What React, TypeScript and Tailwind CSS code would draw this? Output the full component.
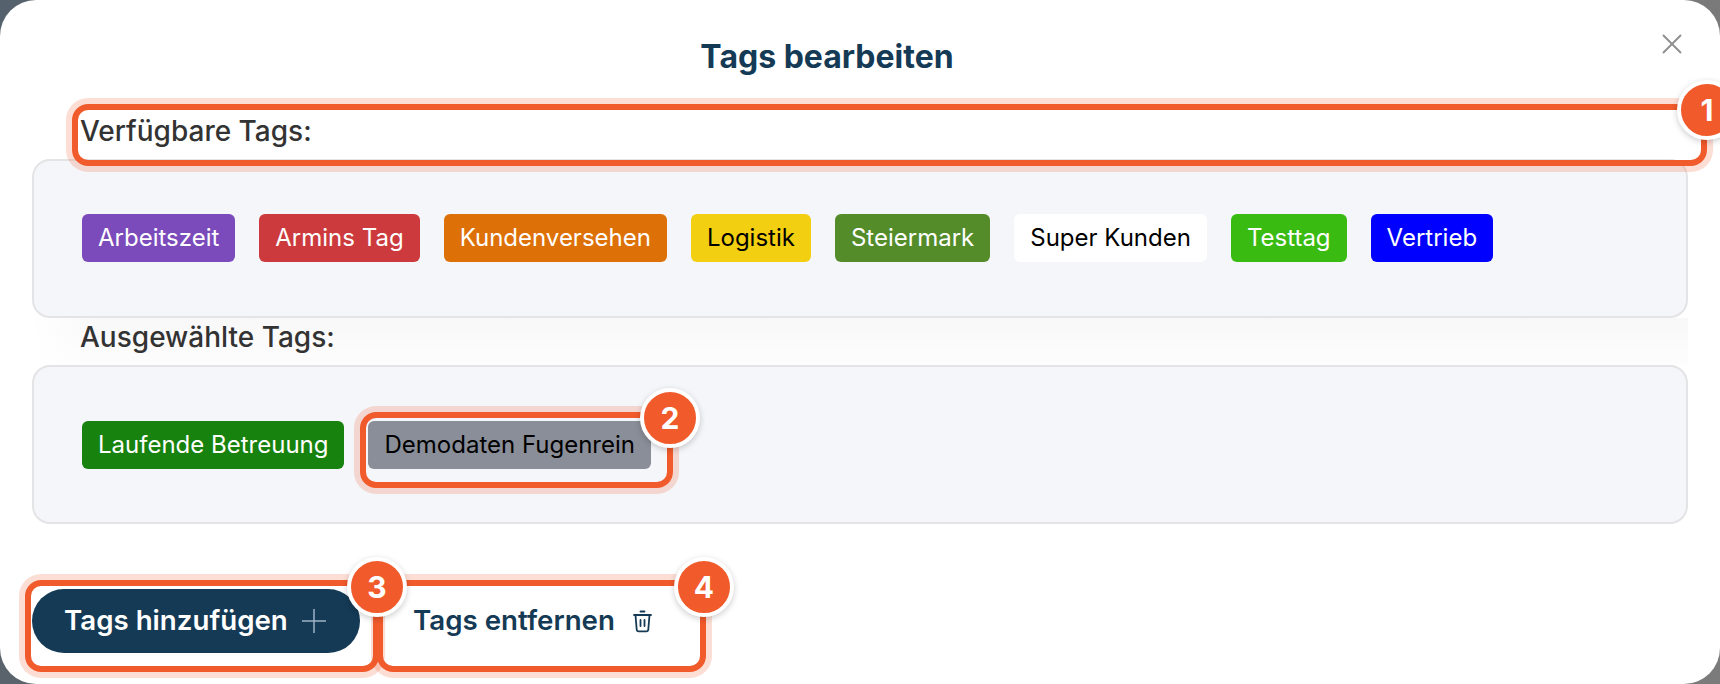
const available = [
  { label: "Arbeitszeit", className: "bg-[#7b4abb] text-white" },
  { label: "Armins Tag", className: "bg-[#cc3a3d] text-white" },
  { label: "Kundenversehen", className: "bg-[#dd7006] text-white" },
  { label: "Logistik", className: "bg-[#f2cf10] text-black" },
  { label: "Steiermark", className: "bg-[#548c2a] text-white" },
  { label: "Super Kunden", className: "bg-white text-black" },
  { label: "Testtag", className: "bg-[#3abb11] text-white" },
  { label: "Vertrieb", className: "bg-[#0000ff] text-white" },
];

const selected = [
  { label: "Laufende Betreuung", className: "bg-[#17820d] text-white" },
  { label: "Demodaten Fugenrein", className: "bg-[#8a8e98] text-black" },
];

function Tag({ label, className }: { label: string; className: string }) {
  return (
    <span className={`flex h-12 items-center rounded-md px-4 text-[24px] ${className}`}>
      {label}
    </span>
  );
}

function TagPanel({ tags, className }: { tags: { label: string; className: string }[]; className: string }) {
  return (
    <div className={`flex h-[159px] gap-6 rounded-[18px] border-2 border-[#e4e4e6] bg-[#f5f6fa] px-[48px] ${className}`}>
      {tags.map((tag) => (
        <Tag key={tag.label} {...tag} />
      ))}
    </div>
  );
}

// annotation frame drawn over the screenshot
function Frame({ className }: { className: string }) {
  return (
    <div
      className={`pointer-events-none absolute rounded-[16px] border-[6px] border-[#f15a2b] shadow-[0_0_0_6px_rgba(241,90,43,0.2)] ${className}`}
    />
  );
}

function Badge({ n, className }: { n: number; className: string }) {
  return (
    <div
      className={`absolute flex h-[60px] w-[60px] items-center justify-center rounded-full border-4 border-white bg-[#f15a2b] text-[30px] font-bold text-white shadow-[0_2px_6px_rgba(0,0,0,0.2)] ${className}`}
    >
      {n}
    </div>
  );
}

export default function App() {
  return (
    <div className="h-[684px] w-[1720px] overflow-hidden bg-[linear-gradient(100deg,#55616c_0%,#6b6b6b_30%,#7b7b7b_100%)] font-[Inter,sans-serif]">
      <div className="relative flex h-full flex-col overflow-hidden rounded-[36px] bg-white">
        <div className="flex h-[112px] items-start pt-[34px]">
          <h2 className="mt-px w-[1654px] text-center text-[32px] leading-[44px] font-bold text-[#153a55]">
            Tags bearbeiten
          </h2>
          <svg className="ml-2" width="20" height="20" viewBox="0 0 20 20" fill="none" stroke="#8d8d8d" strokeWidth="1.8">
            <path d="M1 1l18 18M19 1L1 19" />
          </svg>
        </div>

        <div className="px-8">
          <div className="h-[47px] pl-[48px] text-[28px] leading-[38px] font-medium text-[#333]">Verfügbare Tags:</div>
          <TagPanel tags={available} className="pt-[53px]" />
          <div className="h-[47px] bg-[linear-gradient(90deg,#ffffff_0%,transparent_4%),linear-gradient(180deg,#f8f8f8_0%,#fdfdfd_100%)] pl-[48px] text-[28px] leading-[38px] font-medium text-[#333]">
            Ausgewählte Tags:
          </div>
          <TagPanel tags={selected} className="pt-[54px]" />
        </div>

        <div className="flex items-center gap-[22px] pt-[65px] pl-8">
          <button className="flex h-16 w-[328px] items-center gap-[14px] rounded-[32px] bg-[#153a55] pl-[32px] text-[27.7px] font-semibold text-white">
            Tags hinzufügen
            <svg width="24" height="24" viewBox="0 0 24 24" fill="none" stroke="#9fb3c6" strokeWidth="1.5">
              <path d="M12 0v24M0 12h24" />
            </svg>
          </button>
          <button className="flex h-16 items-center gap-[18px] pl-[31px] text-[27.7px] font-semibold text-[#153a55]">
            Tags entfernen
            <svg width="19" height="23" viewBox="0 0 19 23" fill="none" stroke="#153a55" strokeWidth="1.8" strokeLinecap="round" strokeLinejoin="round">
              <path d="M7.5 1.5h4M1 5h17M2.5 5l1.2 14.5a2 2 0 0 0 2 1.8h7.6a2 2 0 0 0 2-1.8L16.5 5M7.5 10v6M11.5 10v6" />
            </svg>
          </button>
        </div>

        <Frame className="top-[104px] left-[72px] h-[62px] w-[1635px]" />
        <Frame className="top-[412px] left-[360px] h-[76px] w-[313px]" />
        <Frame className="top-[580px] left-[25px] h-[92px] w-[354px]" />
        <Frame className="top-[580px] left-[377px] h-[92px] w-[329px]" />

        <Badge n={1} className="top-[80px] left-[1677px]" />
        <Badge n={2} className="top-[388px] left-[640px]" />
        <Badge n={3} className="top-[557px] left-[347px]" />
        <Badge n={4} className="top-[557px] left-[674px]" />
      </div>
    </div>
  );
}
